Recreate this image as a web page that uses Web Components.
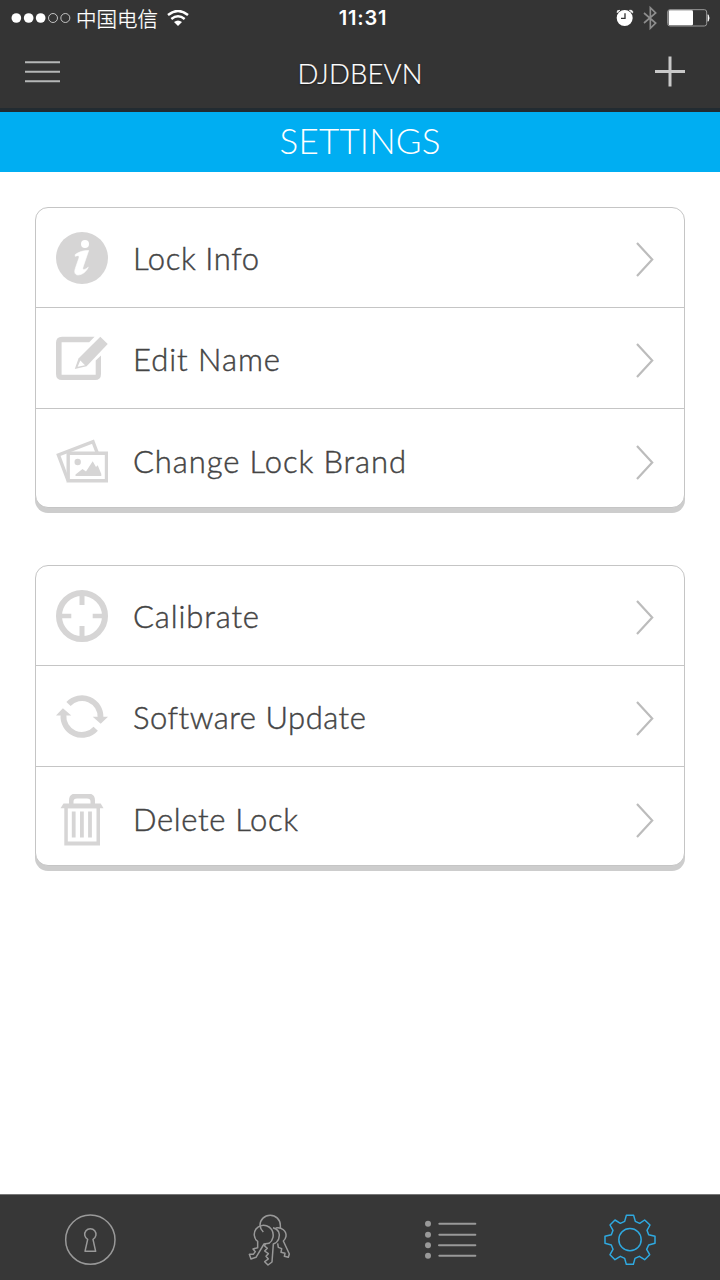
<!DOCTYPE html>
<html lang="en">
<head>
<meta charset="utf-8">
<title>Settings</title>
<style>
html,body{margin:0;height:100%;background:#fff}
</style>
</head>
<body>
<settings-app></settings-app>
<script>
function define(name, markup, setup) {
  const t = document.createElement('template');
  t.innerHTML = markup;
  customElements.define(name, class extends HTMLElement {
    constructor() {
      super();
      this.attachShadow({mode: 'open'}).appendChild(t.content.cloneNode(true));
    }
    connectedCallback() { if (setup) setup(this, this.shadowRoot); }
  });
}

const ICONS = {
  info: `<circle cx="26" cy="26" r="26"/><g fill="#fff"><circle cx="29" cy="12" r="4"/><path d="M19.2 22.6C23 19.8 27.500 18.300 32.700 18.500L27 35.200C26 38.300 28.500 38.300 32.300 35.200C30 40.200 26 42.800 21.800 43C18.600 42.700 18.200 40 19.300 36.500L22.800 26.300C23.600 23.200 22.200 23.200 19.200 24.300Z" stroke="#fff" stroke-width=".6" stroke-linejoin="round"/></g>`,
  edit: `<path d="M38.600 4.700H6Q0 4.700 0 10.700V42Q0 48 6 48H39Q45 48 45 42V23.500L39.700 28.500V42.700H5.600V10.200H33.200Z"/><path d="M44.300 4.700L51.700 12L30.600 34.300L18.800 37L22.500 26.500Z"/><path d="M24.300 28.500L29 33.200L21.600 34.700Z" fill="#fff"/>`,
  pictures: `<path d="M12 44.500L2.400 18.900L37 5.700L41.300 17" fill="none" stroke="#d6d5d5" stroke-width="3.400"/><path d="M12.200 17.200H50.500V44.800H12.200Z" fill="#fff" stroke="#d6d5d5" stroke-width="3.400"/><circle cx="21.700" cy="26" r="3.200"/><path d="M19.500 40V38.500L26.500 33L30 35.500L36.700 25.300L40 31L41.700 29.300L45.300 38V40Z"/>`,
  calibrate: `<circle cx="26" cy="26" r="23" fill="none" stroke="#d6d5d5" stroke-width="6"/><path d="M23.500 5h5v10h-5zM23.500 36h5v11h-5zM5 23.800h10.300v4.500H5zM36.700 23.800H47v4.500H36.700z"/>`,
  update: `<g fill="none" stroke="#d6d5d5" stroke-width="5.800"><path d="M12.500 14A18.500 18.500 0 0 1 44.500 27.500"/><path d="M39.700 38.700A18.500 18.500 0 0 1 7.500 24.500"/></g><path d="M36.700 26.800H52L44.700 33.800ZM0 25.500H15.300L6.900 18.200Z"/>`,
  trash: `<g transform="translate(0 -.5)"><path d="M13 11V7Q13 0 20 0H32Q39 0 39 7V11H34.500V8Q34.500 5 31 5H21Q17.500 5 17.500 8V11Z"/><path d="M7.500 10H44.700L47.500 14.800H4.500Z"/><path d="M8.300 14H44V52H8.300ZM11.800 14.800V48H40.500V14.800Z" fill-rule="evenodd"/><path d="M15.800 18h3.800v26h-3.800zM24 18h3.800v26H24zM32.100 18h3.800v26h-3.800z"/></g>`
};

function gearPath() {
  const points = [[679,91],[701,91],[706,109],[719,115],[734,105],[750,120],[741,136],[746,149],[765,154],[765,175],[746,180],[740,193],[749,209],[734,224],[718,214],[705,220],[700,238],[679,238],[674,220],[661,214],[645,224],[630,209],[639,193],[634,180],[615,175],[615,154],[634,149],[639,136],[630,120],[645,105],[661,115],[674,109]];
  return 'M' + points.map(p => p.join(' ')).join('L') + 'Z';
}

const TABS = {
  lock: ['60 75 180 180', `<circle cx="151" cy="164" r="74"/><path d="M143 163A17 17 0 1 1 159 163L167 199H135Z"/>`],
  keys: ['600 75 180 180', `<path d="M670 141Q661 132 660 121A30.500 30.500 0 0 1 721 121V130"/><path d="M664 122C672 119 687 122 695 134C704 148 699 168 687 175L672 177L648 217L633 222L628 208L640 208L646 200L639 192L653 188V169C641 161 640 143 648 132Q654 124 664 122Z"/><path d="M699 128C716 132 722 147 716 162Q712 173 700 177L696 231L684 240L674 230L685 222L678 214L685 206L674 198L682 190L674 183L676 175"/><path d="M707 129C725 125 740 139 738 154Q736 163 730 168L748 207L745 217L733 214L735 205L723 202L725 191L715 187L713 175"/>`],
  list: ['60 75 180 180', `<g fill="#999" stroke="none"><circle cx="84" cy="116" r="9"/><circle cx="84" cy="149" r="9"/><circle cx="84" cy="181" r="9"/><circle cx="84" cy="212" r="9"/></g><path d="M118 116.500H226M118 149H226M117 181H226M118 212.500H226" stroke-width="6" stroke-linecap="round"/>`],
  gear: ['600 75 180 180', `<path d="${gearPath()}"/><circle cx="690" cy="164" r="33.500"/>`]
};

// Text tracked out to a given width; the trailing space is cancelled by a negative margin.
define('tracked-text', `
<style>
:host{display:inline-block;white-space:nowrap}
</style><slot></slot>`,
el => {
  const n = el.textContent.length - 1;
  const gap = (+el.getAttribute('width') - el.getBoundingClientRect().width) / n;
  el.style.letterSpacing = gap + 'px';
  el.style.marginRight = -gap + 'px';
});

define('status-bar', `
<style>
:host{display:grid;grid-template-columns:1fr auto 1fr;height:36px;align-items:center;color:#fff}
svg{display:block}
.left{display:flex;align-items:center;padding-left:11px}
.carrier{font:300 20.500px/30px "Noto Sans CJK SC",sans-serif;-webkit-text-stroke:.3px #fff;margin:0 9px 1px 5px}
.time{font:600 20px/24px Inter,sans-serif;letter-spacing:.8px;margin-left:6px}
.right{display:flex;justify-content:flex-end}
</style>
<div class="left">
<svg width="60" height="12" viewBox="33 34 180 36" fill="#fff"><circle cx="49" cy="52" r="14.500"/><circle cx="86" cy="52" r="14.500"/><circle cx="122" cy="52" r="14.500"/><g fill="none" stroke="#ddd" stroke-width="2.500"><circle cx="159" cy="52" r="13.500"/><circle cx="196" cy="52" r="13.500"/></g></svg>
<span class="carrier">中国电信</span>
<svg width="22" height="17" viewBox="501 27 66 51"><g fill="none" stroke="#fff" stroke-width="7.500"><path d="M504 42Q534 18 564 42M514 54Q534 38 554 54"/></g><path d="M522 63Q534 54 546 63L534 75Z" fill="#fff"/></svg>
</div>
<span class="time">11:31</span>
<div class="right">
<svg width="110" height="30" viewBox="90 9 330 90"><circle cx="134" cy="54" r="24" fill="#fff"/><path d="M111 38Q110 29 120 31ZM148 31Q160 29 158 39Z" fill="#fff" stroke="#fff" stroke-width="2"/><path d="M135 40V55H123" fill="none" stroke="#333" stroke-width="4"/><path d="M192 39L227 69L211 85V23L227 39L192 69" fill="none" stroke="#8d8d8d" stroke-width="5"/><rect x="263" y="29" width="117" height="49" rx="7" fill="none" stroke="#999" stroke-width="3"/><rect x="266" y="31" width="73" height="45" rx="4" fill="#fff"/><path d="M384 44Q391 54 384 64Z" fill="#fff" stroke="#fff" stroke-width="2"/></svg>
</div>`);

define('nav-bar', `
<style>
:host{display:grid;grid-template-columns:90px 1fr 90px;height:72px;align-items:center;border-bottom:4px solid #222b31}
svg{display:block}
h1{margin:0;text-align:center;color:#fff;font:300 27.500px/36px Lato,sans-serif;text-shadow:0 1px 2px #0008;-webkit-text-stroke:.2px #fff;padding-top:4px}
.plus{justify-self:end;margin-right:34px}
.menu{margin:0 0 1px 25px}
</style>
<svg class="menu" width="36" height="24" fill="none" stroke="#b5b7b7" stroke-width="2"><path d="M0 2.300H35M0 11.700H35M0 21.300H35"/></svg>
<h1><slot></slot></h1>
<svg class="plus" width="32" height="32" fill="none" stroke="#c8c8c8" stroke-width="3"><path d="M1 15.500H31M16 .5V30.500"/></svg>`);

define('section-title', `
<style>
:host{display:block;box-sizing:border-box;height:60px;background:#00aef2;color:#fff;text-align:center;font:300 35px/57px Lato,sans-serif}
</style><slot></slot>`);

define('settings-card', `
<style>
:host{display:block;box-sizing:border-box;height:301px;border:1px solid #c5c5c5;border-radius:13px;box-shadow:0 5px 0 #cdcdcd;background:#fff}
</style><slot></slot>`);

define('settings-row', `
<style>
:host{display:flex;box-sizing:border-box;height:100px;align-items:flex-start;border-bottom:1px solid #c5c5c5;padding:0 30px 0 20px}
:host(:nth-of-type(2)){height:101px}
:host(:last-of-type){border-bottom:0;height:98px}
.icon{display:block;flex:none;width:52px;height:52px;margin-top:calc(23.500px + var(--shift,0px))}
.label{flex:1;margin-left:25px;white-space:nowrap;color:#444;font:300 31px/40px Lato,sans-serif;-webkit-text-stroke:.45px #444;margin-top:calc(30px + var(--label-shift,0px))}
.chev{display:block;flex:none;margin-top:calc(33px + var(--chev-shift,0px))}
</style>
<svg class="icon" viewBox="0 0 52 52" fill="#d6d5d5"></svg>
<span class="label"><slot></slot></span>
<svg class="chev" width="19" height="38" fill="none" stroke="#bcbcbc" stroke-width="2.200"><path d="M2 2L17.200 18.500L2 35"/></svg>`,
(el, root) => {
  root.querySelector('.icon').innerHTML = ICONS[el.getAttribute('icon')];
});

define('tab-item', `
<style>
:host{display:grid;place-items:center;padding-top:5px;color:#999}
:host([active]){color:#2fa9e0}
svg{display:block}
</style>
<svg width="60" height="60" fill="none" stroke="currentColor" stroke-width="4.500" stroke-linejoin="round"></svg>`,
(el, root) => {
  const [box, art] = TABS[el.getAttribute('icon')];
  const svg = root.querySelector('svg');
  svg.setAttribute('viewBox', box);
  svg.innerHTML = art;
});

define('tab-bar', `
<style>
:host{display:grid;grid-template-columns:repeat(4,1fr);box-sizing:border-box;height:86px;background:#373737;border-top:1px solid #777}
</style><slot></slot>`);

define('settings-app', `
<style>
:host{display:flex;flex-direction:column;width:720px;height:1280px;background:#fff;overflow:hidden}
header{background:#343434}
main{flex:1;display:flex;flex-direction:column;gap:57px;padding:35px 35px 0}
.mid{--label-shift:.5px;--chev-shift:1px}
.low{--shift:3.500px;--label-shift:2px;--chev-shift:2px}
</style>
<header>
<status-bar></status-bar>
<nav-bar><tracked-text width="125">DJDBEVN</tracked-text></nav-bar>
</header>
<section-title><tracked-text width="161">SETTINGS</tracked-text></section-title>
<main>
<settings-card>
<settings-row icon="info"><tracked-text width="126">Lock Info</tracked-text></settings-row>
<settings-row class="mid" icon="edit"><tracked-text width="147">Edit Name</tracked-text></settings-row>
<settings-row class="low" icon="pictures"><tracked-text width="273">Change Lock Brand</tracked-text></settings-row>
</settings-card>
<settings-card>
<settings-row icon="calibrate"><tracked-text width="126">Calibrate</tracked-text></settings-row>
<settings-row class="mid" icon="update"><tracked-text width="232">Software Update</tracked-text></settings-row>
<settings-row class="low" icon="trash"><tracked-text width="165">Delete Lock</tracked-text></settings-row>
</settings-card>
</main>
<tab-bar>
<tab-item icon="lock"></tab-item>
<tab-item icon="keys"></tab-item>
<tab-item icon="list"></tab-item>
<tab-item icon="gear" active></tab-item>
</tab-bar>`);
</script>
</body>
</html>
